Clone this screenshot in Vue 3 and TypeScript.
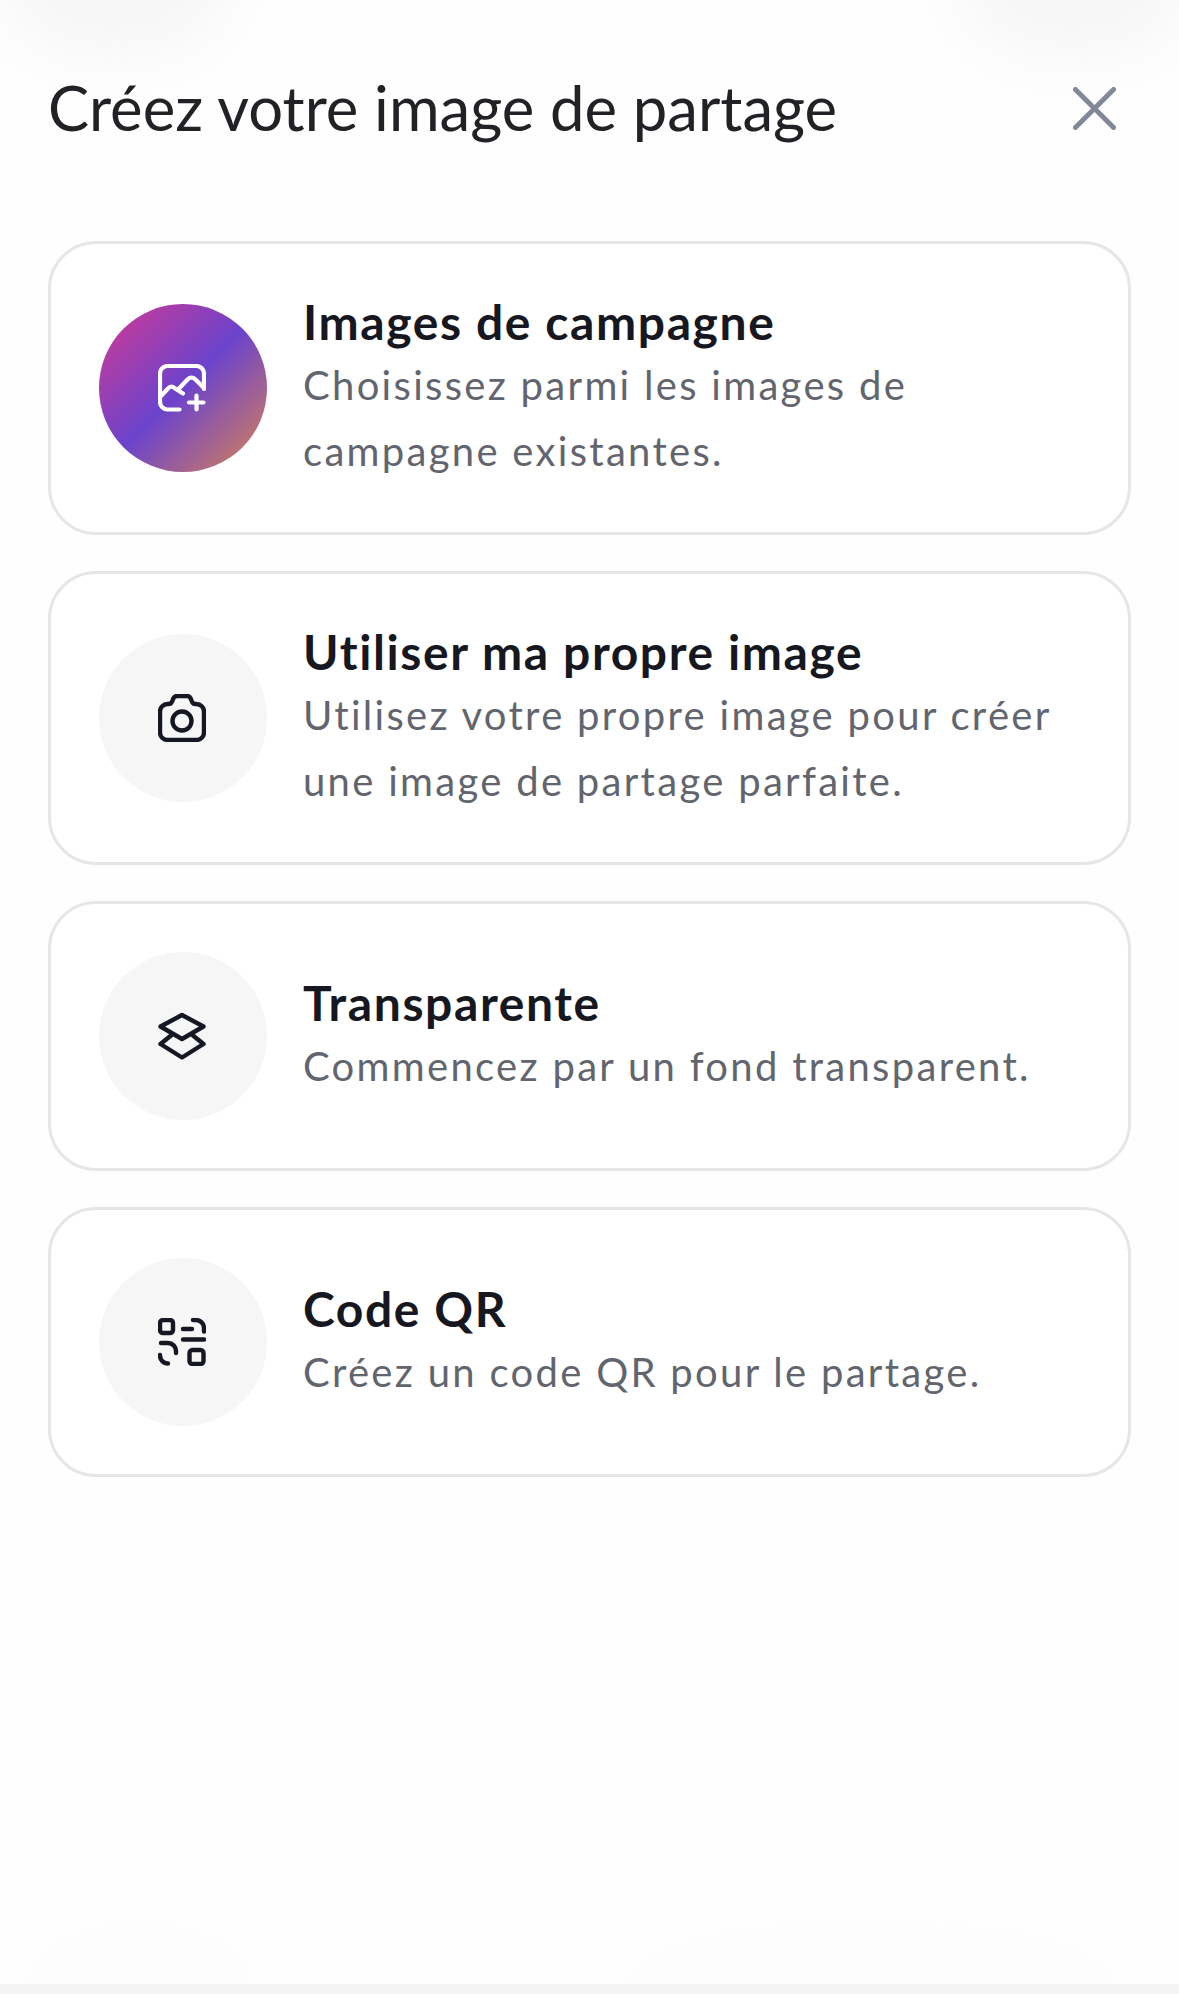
<script setup lang="ts">
const options = [
  { id: 'campaign', title: 'Images de campagne', text: 'Choisissez parmi les images de campagne existantes.', active: true },
  { id: 'own', title: 'Utiliser ma propre image', text: 'Utilisez votre propre image pour créer une image de partage parfaite.', active: false },
  { id: 'transparent', title: 'Transparente', text: 'Commencez par un fond transparent.', active: false },
  { id: 'qr', title: 'Code QR', text: 'Créez un code QR pour le partage.', active: false },
]
</script>

<template>
  <div class="sheet">
    <div class="glow glow-left"></div>
    <div class="glow glow-right"></div>
    <div class="glow glow-bottom-left"></div>
    <div class="glow glow-bottom-right"></div>

    <div class="head">
      <h1 class="head-title">Créez votre image de partage</h1>
      <svg class="close" viewBox="0 0 44 44" fill="none" stroke="#818897" stroke-width="5" stroke-linecap="round">
        <path d="M2.500 2.500 41.500 41.500M41.500 2.500 2.500 41.500" />
      </svg>
    </div>

    <div class="list">
      <div v-for="o in options" :key="o.id" class="card">
        <div class="circle" :class="{ gradient: o.active }">
          <svg v-if="o.id === 'campaign'" class="icon" viewBox="0 0 48 48" fill="none" stroke="#fff" stroke-width="4.200" stroke-linecap="round" stroke-linejoin="round">
            <path d="M21.500 45.500H9.500a7.500 7.500 0 0 1-7.500-7.500V9.500A7.500 7.500 0 0 1 9.500 2h29A7.500 7.500 0 0 1 46 9.500V25" />
            <path d="M3 32l7-7.500c2-2.500 5-2.500 7 0l8 5M21.500 24l8-8.500c2.500-2.500 5.500-2.500 8 0l8.500 8.500" />
            <path d="M38.500 31.500v14M31 38.500h14.500" />
          </svg>
          <svg v-else-if="o.id === 'own'" class="icon" viewBox="0 0 48 48" fill="none" stroke="#151823" stroke-width="4.400" stroke-linecap="round" stroke-linejoin="round">
            <path d="M2 17.500a7.500 7.500 0 0 1 7.500-7.500h1c1.700 0 2.800-.8 3.500-2.300l.7-1.700C15.500 3.500 17 2 19 2h10c2 0 3.500 1.500 4.300 4l.7 1.700c.7 1.500 1.800 2.300 3.500 2.300h1a7.500 7.500 0 0 1 7.500 7.500v21a7.500 7.500 0 0 1-7.500 7.500h-29A7.500 7.500 0 0 1 2 38.500z" />
            <circle cx="24" cy="27" r="9.500" />
          </svg>
          <svg v-else-if="o.id === 'transparent'" class="icon" viewBox="0 0 48 48" fill="none" stroke="#151823" stroke-width="4.400" stroke-linecap="round" stroke-linejoin="round">
            <path d="M24 3 45.500 14.500 24 27 2.500 14.500z" />
            <path d="M13 23.500 2.500 32 24 45.500 45.500 32 35 23.500" />
          </svg>
          <svg v-else class="icon" viewBox="0 0 48 48" fill="none" stroke="#151823" stroke-width="4.400" stroke-linecap="round" stroke-linejoin="round">
            <rect x="2" y="2" width="13" height="13" rx="3" />
            <rect x="31.500" y="32" width="14" height="14" rx="3" />
            <path d="M25 11h9M35 2h3a8 8 0 0 1 8 8v3.500M25 21.500h21M3 25h7a8 8 0 0 1 8 8v2M2 37a8 8 0 0 0 8 8.500" />
          </svg>
        </div>
        <div class="info">
          <div class="info-title">{{ o.title }}</div>
          <div class="info-text">{{ o.text }}</div>
        </div>
      </div>
    </div>

    <div class="bottom-strip"></div>
  </div>
</template>

<style scoped>
.sheet {
  position: relative;
  width: 1179px;
  height: 1994px;
  box-sizing: border-box;
  padding: 68px 48px 0;
  background: #fefefe;
  overflow: hidden;
  font-family: Lato, "Liberation Sans", sans-serif;
}

.glow {
  position: absolute;
  border-radius: 50%;
  background: #ededed;
  filter: blur(28px);
  opacity: 0.45;
}

.glow-left {
  top: -90px;
  left: 0;
  width: 230px;
  height: 150px;
}

.glow-right {
  top: -90px;
  right: -10px;
  width: 230px;
  height: 150px;
}

.glow-bottom-left {
  bottom: -60px;
  left: 30px;
  width: 220px;
  height: 120px;
  opacity: 0.12;
}

.glow-bottom-right {
  bottom: -70px;
  left: 620px;
  width: 500px;
  height: 130px;
  opacity: 0.12;
}

.head {
  position: relative;
  display: flex;
  align-items: center;
  justify-content: space-between;
  height: 78px;
  padding-right: 15px;
}

.head-title {
  margin: 0;
  font-size: 61.600px;
  font-weight: 400;
  line-height: 78px;
  color: #212226;
}

.close {
  width: 43px;
  height: 43px;
  margin-top: 2px;
}

.list {
  position: relative;
  display: flex;
  flex-direction: column;
  gap: 36px;
  margin-top: 95px;
}

.card {
  display: flex;
  align-items: center;
  gap: 36px;
  box-sizing: border-box;
  padding: 48px;
  border: 3px solid #e5e6e8;
  border-radius: 48px;
  background: #fff;
}

.circle {
  display: flex;
  flex: none;
  align-items: center;
  justify-content: center;
  width: 168px;
  height: 168px;
  border-radius: 50%;
  background: #f6f6f7;
}

.gradient {
  background: linear-gradient(135deg, #cf3a95 3%, #6b43cc 50%, #d5805a 97%);
}

.icon {
  width: 48px;
  height: 48px;
  margin-right: 2px;
}

.info {
  flex: 1;
  min-width: 0;
}

.info-title {
  font-size: 48px;
  font-weight: 700;
  line-height: 60px;
  letter-spacing: 1.600px;
  color: #17181f;
}

.info-text {
  font-size: 40px;
  line-height: 66px;
  letter-spacing: 2.300px;
  color: #62656e;
}

.bottom-strip {
  position: absolute;
  left: 0;
  right: 0;
  bottom: 0;
  height: 10px;
  background: #f4f4f4;
}
</style>

<style>
html,
body {
  margin: 0;
  background: #fefefe;
}
</style>
